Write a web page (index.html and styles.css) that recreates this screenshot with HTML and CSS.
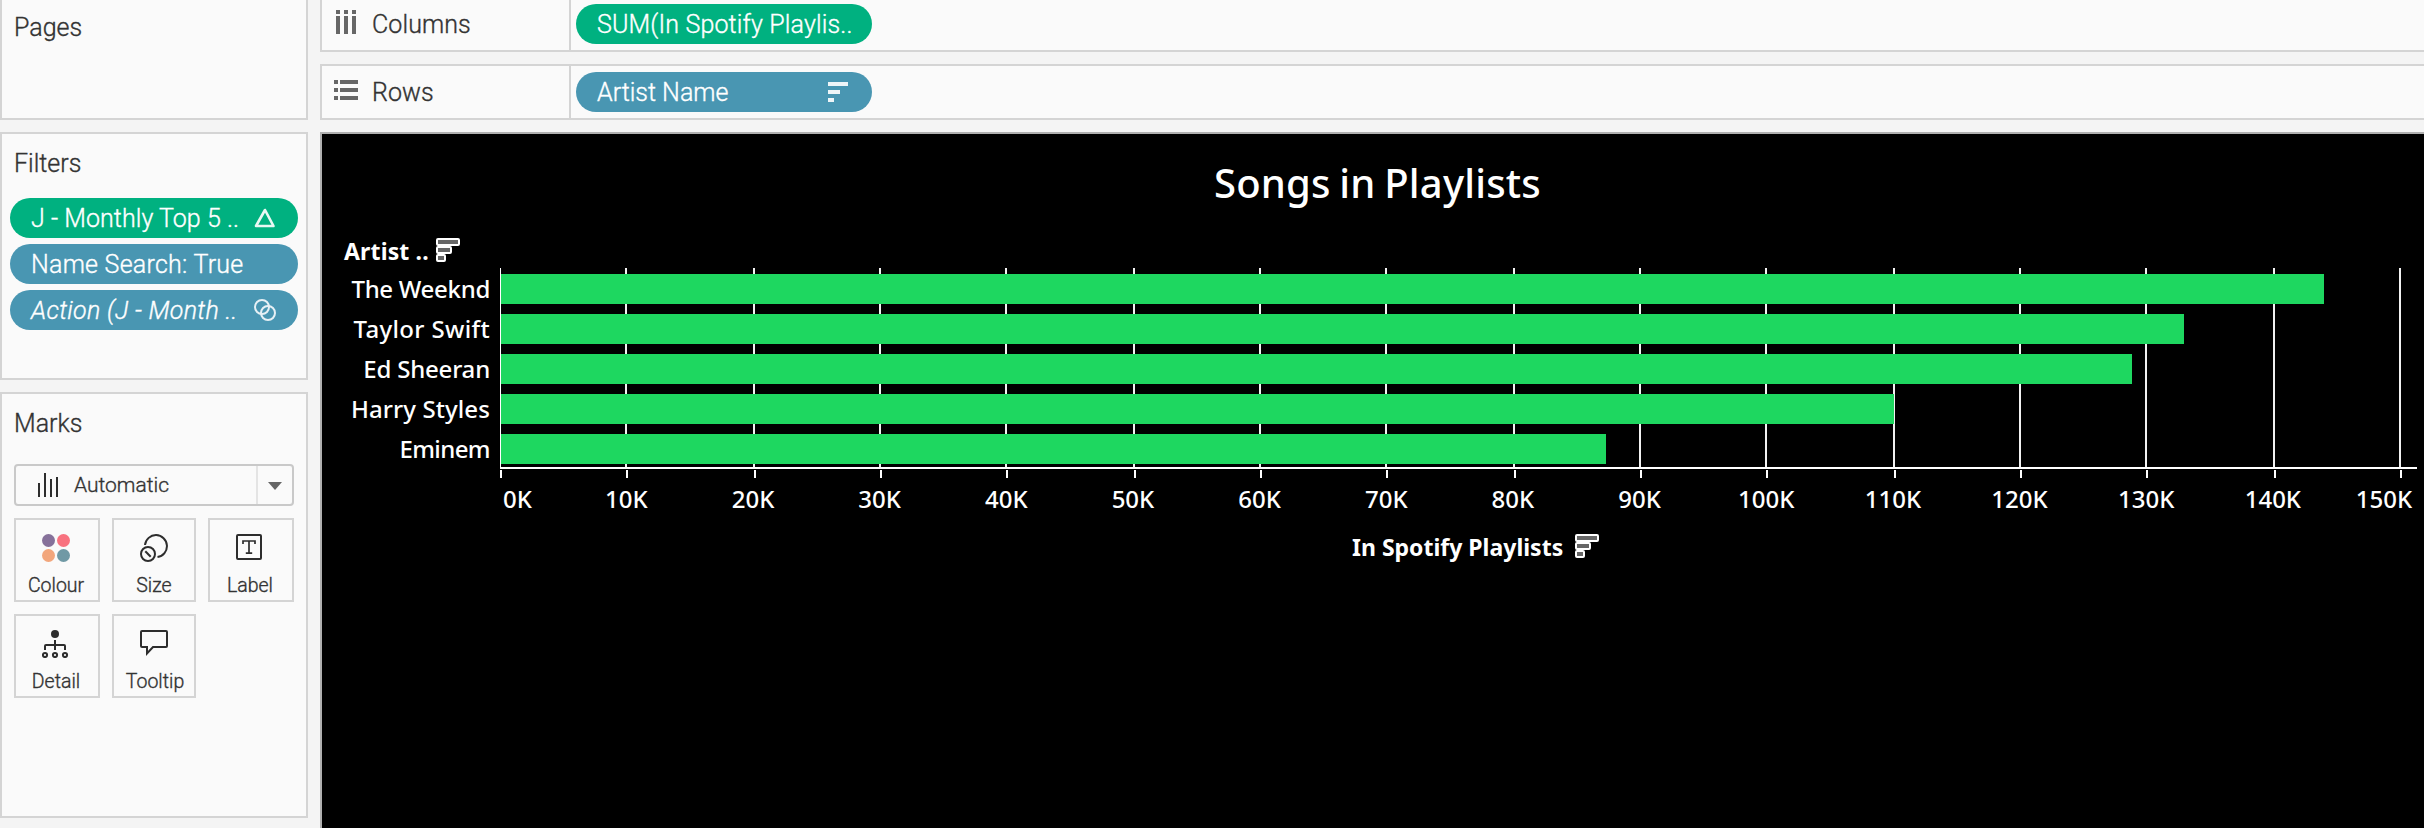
FILE: index.html
```html
<!DOCTYPE html>
<html lang="en">
<head>
<meta charset="utf-8">
<title>Songs in Playlists</title>
<link rel="stylesheet" href="styles.css">
</head>
<body>
<div class="workspace">
  <aside class="cards">
    <section class="card card-pages"><h2 class="card-title">Pages</h2></section>
    <section class="card card-filters">
      <h2 class="card-title">Filters</h2>
      <div class="pill-list">
        <div class="pill green"><span class="t-monthly">J - Monthly Top 5 ..</span>
          <svg width="22" height="20" viewBox="0 0 22 20"><path d="M11 2 L19.5 18 H2 Z" fill="none" stroke="#e9f8f3" stroke-width="2.6" stroke-linejoin="round"/></svg></div>
        <div class="pill blue"><span class="t-search">Name Search: True</span></div>
        <div class="pill blue"><span class="t-action">Action (J - Month ..</span>
          <svg width="22" height="22" viewBox="0 0 22 22"><g fill="none" stroke="#e6f0f5" stroke-width="2"><circle cx="8" cy="8" r="7"/><circle cx="14" cy="14" r="7"/></g></svg></div>
      </div>
    </section>
    <section class="card card-marks">
      <h2 class="card-title">Marks</h2>
      <div class="mark-type">
        <svg class="mark-icon" width="20" height="24" viewBox="0 0 20 24"><path d="M0 10h2v14H0zM6 0h2v24H6zM12 6h2v18h-2zM18 4h2v20h-2z" fill="#2d2d2d"/></svg>
        <span class="mark-name">Automatic</span>
        <span class="mark-arrow"><svg width="14" height="8" viewBox="0 0 14 8"><path d="M0 0H14L7 8Z" fill="#666"/></svg></span>
      </div>
      <div class="mark-grid">
        <div class="mark-btn shift">
          <svg width="28" height="28" viewBox="0 0 28 28"><circle cx="6.5" cy="6.5" r="6.5" fill="#86719a"/><circle cx="21.5" cy="6.5" r="6.5" fill="#f8727f"/><circle cx="6.5" cy="21.5" r="6.5" fill="#f2a67c"/><circle cx="21.5" cy="21.5" r="6.5" fill="#7099a5"/></svg>
          <span>Colour</span></div>
        <div class="mark-btn">
          <svg width="28" height="28" viewBox="0 0 28 28"><g fill="none" stroke="#2d2d2d" stroke-width="2"><path d="M5 11A11 11 0 1 1 17.5 23"/><circle cx="8" cy="20" r="7"/><path d="M5.3 17.2L10.7 22.8"/></g></svg>
          <span>Size</span></div>
        <div class="mark-btn shift">
          <svg class="label-icon" width="26" height="28" viewBox="0 0 26 28"><g fill="none" stroke="#2d2d2d" stroke-width="2"><rect x="1" y="1" width="24" height="24" rx="1"/><path d="M7 10V7H19V10M13 7V19.2M9.8 19.2H16.2" stroke-width="1.7"/></g></svg>
          <span>Label</span></div>
        <div class="mark-btn shift">
          <svg width="28" height="28" viewBox="0 0 28 28"><circle cx="13" cy="4" r="4" fill="#2d2d2d"/><g fill="none" stroke="#2d2d2d" stroke-width="2"><path d="M13 10V20M3 20V16Q3 15 4 15H22Q23 15 23 16V20"/><circle cx="3" cy="25" r="2.1"/><circle cx="13" cy="25" r="2.1"/><circle cx="23" cy="25" r="2.1"/></g></svg>
          <span>Detail</span></div>
        <div class="mark-btn">
          <svg width="28" height="28" viewBox="0 0 28 28"><path d="M2 1H26Q27 1 27 2V16Q27 17 26 17H13L7 23.500V17H2Q1 17 1 16V2Q1 1 2 1Z" fill="none" stroke="#2d2d2d" stroke-width="2"/></svg>
          <span class="t-tooltip">Tooltip</span></div>
      </div>
    </section>
  </aside>

  <main class="view">
    <div class="shelf shelf-columns">
      <div class="shelf-name">
        <svg width="24" height="24" viewBox="0 0 24 24"><path d="M2 0h4v4H2zM10 0h4v4h-4zM18 0h4v4h-4zM2 6h4v18H2zM10 6h4v18h-4zM18 6h4v18h-4z" fill="#666"/></svg>
        <span>Columns</span></div>
      <div class="shelf-drop"><div class="pill green"><span class="t-sum">SUM(In Spotify Playlis..</span></div></div>
    </div>
    <div class="shelf shelf-rows">
      <div class="shelf-name">
        <svg width="24" height="24" viewBox="0 0 24 24"><path d="M0 2h4v4H0zM6 2h18v4H6zM0 10h4v4H0zM6 10h18v4H6zM0 18h4v4H0zM6 18h18v4H6z" fill="#666"/></svg>
        <span>Rows</span></div>
      <div class="shelf-drop"><div class="pill blue"><span class="t-artist">Artist Name</span>
        <svg width="22" height="22" viewBox="0 0 22 22"><path d="M0 1h20v4H0zM0 9h12v4H0zM0 17h6v4H0z" fill="#eef5f8"/></svg></div></div>
    </div>

    <div class="sheet">
      <h1 class="sheet-title">Songs in Playlists</h1>
      <div class="field-head"><span class="t-head">Artist ..</span>
        <svg width="24" height="24" viewBox="0 0 24 24"><g fill="#666" stroke="#fff" stroke-width="2"><rect x="1" y="17" width="8" height="6" rx="1"/><rect x="1" y="9" width="14" height="6" rx="1"/><rect x="1" y="1" width="22" height="6" rx="1"/></g></svg></div>
      <div class="chart">
        <div class="row-labels">
          <span class="t-weeknd">The Weeknd</span><span class="t-taylor">Taylor Swift</span><span class="t-ed">Ed Sheeran</span><span class="t-harry">Harry Styles</span><span class="t-eminem">Eminem</span>
        </div>
        <div class="plot">
          <svg class="lines" width="1917" height="210" viewBox="0 0 1917 210" shape-rendering="crispEdges">
            <path d="M0 0h1v200H0z" fill="#fff"/>
            <path d="M126 0v200M254 0v200M380 0v200M506 0v200M634 0v200M760 0v200M886 0v200M1014 0v200M1140 0v200M1266 0v200M1394 0v200M1520 0v200M1646 0v200M1774 0v200M1900 0v200" stroke="#f2f2f2" stroke-width="2"/>
            <path d="M0 200H1917" stroke="#fff" stroke-width="2"/>
            <path d="M1 202v8M127 202v8M255 202v8M381 202v8M507 202v8M635 202v8M761 202v8M887 202v8M1015 202v8M1141 202v8M1267 202v8M1395 202v8M1521 202v8M1647 202v8M1775 202v8M1901 202v8" stroke="#fff" stroke-width="2"/>
          </svg>
          <div class="bars">
            <div class="bar" style="width:1823px"></div>
            <div class="bar" style="width:1683px"></div>
            <div class="bar" style="width:1631px"></div>
            <div class="bar" style="width:1393px"></div>
            <div class="bar" style="width:1105px"></div>
          </div>
        </div>
      </div>
      <div class="axis">
        <span>0K</span><span>10K</span><span>20K</span><span>30K</span><span>40K</span><span>50K</span><span>60K</span><span>70K</span><span>80K</span><span>90K</span><span>100K</span><span>110K</span><span>120K</span><span>130K</span><span>140K</span><span>150K</span>
      </div>
      <div class="axis-title"><span>In Spotify Playlists</span>
        <svg width="24" height="24" viewBox="0 0 24 24"><g fill="#666" stroke="#fff" stroke-width="2"><rect x="1" y="17" width="8" height="6" rx="1"/><rect x="1" y="9" width="14" height="6" rx="1"/><rect x="1" y="1" width="22" height="6" rx="1"/></g></svg></div>
    </div>
  </main>
</div>
</body>
</html>
```
FILE: styles.css
```css
* { box-sizing: border-box; }
body {
  margin: 0;
  background: #f4f4f4;
  color: #333;
  font: 300 25px/40px Roboto, sans-serif;
  -webkit-text-stroke: .35px;
  overflow: hidden;
}
svg { display: block; flex: none; }
span { white-space: pre; }

.workspace { display: flex; gap: 12px; height: 828px; }

/* Left-hand cards */
.cards { width: 308px; flex: none; display: flex; flex-direction: column; gap: 12px; }
.card { border: 2px solid #d4d4d4; background: #fafafa; }
.card-title { margin: 0; padding-left: 12px; font: inherit; }
.card-pages { height: 120px; border-top: 0; padding-top: 8px; }
.card-filters { height: 248px; padding-top: 10px; }
.card-marks { height: 426px; padding-top: 10px; }

.pill-list { display: flex; flex-direction: column; gap: 6px; padding: 14px 8px 0; }
.pill {
  height: 40px;
  border-radius: 20px;
  padding: 0 22px 0 21px;
  display: flex;
  align-items: center;
  justify-content: space-between;
  color: #fff;
}
.pill span { padding-top: 1px; }
.green { background: #00b180; }
.blue { background: #4996b2; }
.t-monthly { letter-spacing: .05px; }
.t-search { letter-spacing: .25px; }
.t-action { font-style: italic; letter-spacing: .3px; }
.t-sum { letter-spacing: .15px; }

.mark-type {
  height: 42px;
  margin: 20px 12px 0;
  border: 2px solid #c9c9c9;
  border-radius: 4px;
  display: flex;
  align-items: center;
  font-size: 21px;
}
.mark-icon { margin-left: 22px; }
.mark-name { margin-left: 16px; flex: 1; line-height: 38px; }
.mark-arrow {
  width: 36px;
  height: 38px;
  border-left: 2px solid #e4e4e4;
  display: flex;
  align-items: center;
  justify-content: center;
  padding-top: 2px;
}
.mark-grid {
  display: grid;
  grid-template-columns: 86px 84px 86px;
  gap: 12px;
  padding: 12px 12px 0;
}
.mark-btn {
  height: 84px;
  border: 2px solid #d4d4d4;
  padding-top: 14px;
  display: flex;
  flex-direction: column;
  align-items: center;
  gap: 9px;
  font-size: 19.5px;
  line-height: 30px;
}
.shift { padding-right: 2px; }
.label-icon { margin-right: 2px; }
.t-tooltip { padding-left: 2px; }

/* Shelves */
.view { flex: 1; min-width: 0; display: flex; flex-direction: column; gap: 12px; }
.shelf {
  display: flex;
  border: 2px solid #d4d4d4;
  border-right: 0;
  background: #fafafa;
}
.shelf-columns { height: 52px; border-top: 0; }
.shelf-rows { height: 56px; }
.shelf-name {
  width: 249px;
  border-right: 2px solid #d4d4d4;
  padding-left: 12px;
  display: flex;
  gap: 14px;
  line-height: 49px;
  letter-spacing: .1px;
}
.shelf-name svg { margin-top: 10px; }
.shelf-rows .shelf-name svg { margin-top: 12px; }
.shelf-rows .shelf-name { line-height: 54px; }
.shelf-drop { padding: 4px 5px; }
.shelf-rows .shelf-drop { padding-top: 6px; }
.shelf-drop .pill { width: 296px; }

/* Worksheet */
.sheet {
  flex: 1;
  border: solid #b0b0b0;
  border-width: 2px 0 0 2px;
  background: #000;
  color: #fff;
  font-family: "Noto Sans", sans-serif;
  font-weight: 500;
  font-size: 24px;
  -webkit-text-stroke: 0;
}
.sheet-title {
  margin: 0;
  height: 96px;
  padding-left: 9px;
  text-align: center;
  font-size: 40px;
  font-weight: 500;
  line-height: 97px;
  letter-spacing: .2px;
  word-spacing: -2px;
}
.field-head {
  height: 38px;
  padding: 8px 0 0 22px;
  display: flex;
  align-items: flex-start;
  gap: 7px;
  font-size: 23px;
  font-weight: 700;
  line-height: 26px;
}
.t-head { letter-spacing: .15px; }
.chart { display: grid; grid-template-columns: 178px 1917px; height: 210px; }
.row-labels { padding: 1px 10px 0 0; display: grid; grid-auto-rows: 40px; text-align: right; }
.t-weeknd { letter-spacing: -.3px; }
.t-taylor { letter-spacing: .35px; }
.t-ed { letter-spacing: -.2px; }
.t-harry { letter-spacing: .1px; }
.t-eminem { letter-spacing: -.6px; }
.plot { display: grid; }
.lines, .bars { grid-area: 1 / 1; }
.bars { padding: 6px 0 0 1px; display: flex; flex-direction: column; gap: 10px; }
.bar { height: 30px; background: #1ed760; }
.axis {
  display: grid;
  grid-template-columns: 63px repeat(14, 126.667px) 76px;
  margin-left: 178px;
  height: 42px;
  text-align: center;
}
.axis span { line-height: 41px; }
.axis span:first-child { text-align: left; padding-left: 3px; }
.axis span:last-child { text-align: right; }
.axis-title {
  padding: 14px 0 0 1030px;
  display: flex;
  gap: 12px;
  font-size: 23px;
  font-weight: 700;
  line-height: 26px;
}
```
